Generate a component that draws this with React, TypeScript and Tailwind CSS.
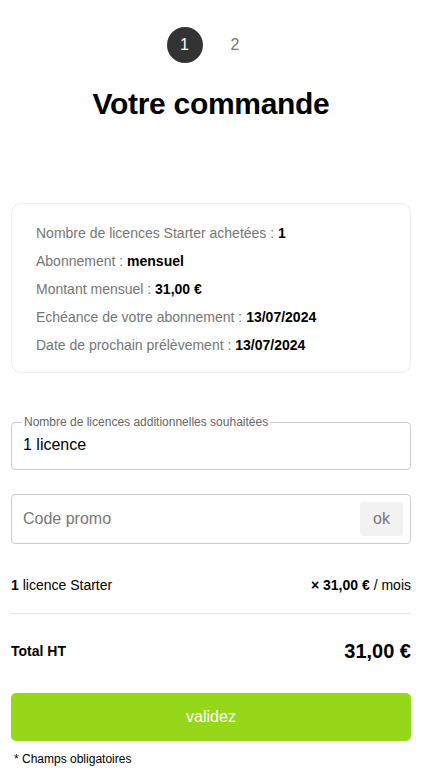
import React, { useState } from 'react';

const infos = [
  { label: 'Nombre de licences Starter achetées', value: '1' },
  { label: 'Abonnement', value: 'mensuel' },
  { label: 'Montant mensuel', value: '31,00 €' },
  { label: 'Echéance de votre abonnement', value: '13/07/2024' },
  { label: 'Date de prochain prélèvement', value: '13/07/2024' },
];

const App: React.FC = () => {
  const [promo, setPromo] = useState('');

  return (
    <div className="min-h-screen bg-white pl-[11px] pr-[25px] pt-[27px] text-black" style={{ fontFamily: '"Liberation Sans", Arial, sans-serif' }}>
      {/* étapes */}
      <div className="flex items-center justify-center gap-[28px] pr-[16px]">
        <div className="flex h-[36px] w-[36px] items-center justify-center rounded-full bg-[#333333] text-[16px] text-white">1</div>
        <div className="text-[16px] text-[#777777]">2</div>
      </div>

      <h1 className="mt-[24px] text-center text-[30px] font-bold leading-[34px] tracking-[-0.3px]">Votre commande</h1>

      <div className="mt-[82px] rounded-[10px] border border-[#ececec] px-[24px] pt-[15px] pb-[13px]">
        {infos.map(i => (
          <p key={i.label} className="text-[14px] leading-[28px] text-[#757575]">
            {i.label} : <span className="font-bold text-black">{i.value}</span>
          </p>
        ))}
      </div>

      <fieldset className="mt-[42px] rounded-[4px] border border-[#cccccc] px-[11px] pb-[15px] pt-0">
        <legend className="px-[2px] text-[12px] leading-[14px] text-[#666666] -ml-[1px]">Nombre de licences additionnelles souhaitées</legend>
        <div className="pt-[7px] text-[16px] leading-[18px]">1 licence</div>
      </fieldset>

      <div className="mt-[24px] flex h-[50px] items-center rounded-[4px] border border-[#cccccc] pl-[11px] pr-[7px]">
        <input
          value={promo}
          onChange={e => setPromo(e.target.value)}
          placeholder="Code promo"
          className="min-w-0 flex-1 bg-transparent text-[16px] text-black outline-none placeholder:text-[#777777]"
        />
        <button className="h-[34px] w-[43px] rounded-[3px] bg-[#f2f2f2] text-[16px] text-[#777777]">ok</button>
      </div>

      <div className="mt-[33px] flex items-center justify-between pb-[20px] text-[14px] leading-[16px]">
        <span><span className="font-bold">1</span> licence Starter</span>
        <span><span className="font-bold">× 31,00 €</span> / mois</span>
      </div>
      <div className="border-t border-[#e5e5e5]" />

      <div className="mt-[22px] flex items-center justify-between">
        <span className="text-[14px] font-bold">Total HT</span>
        <span className="text-[20px] font-bold">31,00 €</span>
      </div>

      <button className="mt-[27px] h-[48px] w-full rounded-[5px] bg-[#96d719] text-[16px] text-white">validez</button>

      <p className="mt-[11px] pl-[3px] text-[12px] leading-[14px]">* Champs obligatoires</p>
    </div>
  );
};

export default App;
